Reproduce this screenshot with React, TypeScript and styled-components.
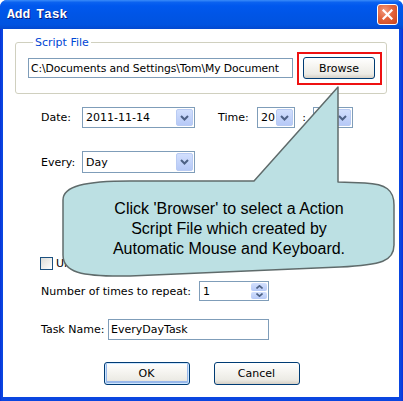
import React from 'react';
import styled, { createGlobalStyle } from 'styled-components';

const GlobalStyle = createGlobalStyle`
  html, body { margin: 0; padding: 0; background: #fff; }
  body { font-family: "DejaVu Sans", Tahoma, sans-serif; font-size: 11px; color: #000; }
  * { box-sizing: border-box; }
`;

const Window = styled.div`
  position: relative;
  width: 403px;
  height: 401px;
  display: flex;
  flex-direction: column;
  background: linear-gradient(to right, #0831d9, #0a46e0 2px, #0a46e0 calc(100% - 2px), #0831d9);
  border-radius: 7px 7px 0 0;
  overflow: hidden;
`;

const TitleBar = styled.div`
  height: 29px;
  flex: none;
  display: flex;
  align-items: center;
  justify-content: space-between;
  padding: 0 5px 0 7px;
  background: linear-gradient(
    to bottom,
    #3a8cf9 0%,
    #0b62f0 8%,
    #0058ee 20%,
    #0055e6 50%,
    #0053e0 85%,
    #0348cf 100%
  );
`;

const Title = styled.span`
  font-family: "Liberation Mono", "DejaVu Sans Mono", monospace;
  font-weight: bold;
  font-size: 13px;
  color: #fff;
  text-shadow: 1px 1px 0 #0a1a7a;
  word-spacing: -2px;
`;

const CloseButton = styled.div`
  width: 21px;
  height: 21px;
  border: 1px solid #fff;
  border-radius: 3px;
  background: radial-gradient(circle at 35% 30%, #f19a7e 0%, #e2643c 45%, #c9431c 100%);
  display: flex;
  align-items: center;
  justify-content: center;
`;

const Client = styled.div`
  flex: 1;
  margin: 0 4px 4px 3px;
  background: #fff;
  display: flex;
  flex-direction: column;
`;

const Group = styled.fieldset`
  margin: 7px 12px 0 12px;
  padding: 8px 11px 14px 12px;
  border: 1px solid #d0d0bf;
  border-radius: 3px;
  display: flex;
  align-items: center;
  gap: 10px;
`;

const Legend = styled.legend`
  color: #0046d5;
  padding: 0 2px;
  margin-left: 5px;
  line-height: 13px;
`;

const TextBox = styled.div<{ $w: number; $h?: number }>`
  width: ${p => p.$w}px;
  height: ${p => p.$h ?? 20}px;
  border: 1px solid #7f9db9;
  background: #fff;
  padding: 0 2px;
  display: flex;
  align-items: center;
  white-space: nowrap;
  overflow: hidden;
  flex: none;
`;

const PathText = styled.span`
  font-size: 10.8px;
  letter-spacing: -0.1px;
`;

const XpButton = styled.div<{ $w: number; $h: number; $default?: boolean }>`
  position: relative;
  width: ${p => p.$w}px;
  height: ${p => p.$h}px;
  flex: none;
  border: 1px solid #003c74;
  border-radius: 3px;
  background: linear-gradient(to bottom, #ffffff 0%, #f6f5f1 40%, #ecebe5 80%, #d6d0c5 100%);
  display: flex;
  align-items: center;
  justify-content: center;
  box-shadow: ${p => (p.$default ? 'inset 0 0 0 1px #cee7ff, inset 0 -1px 0 2px #98b8ea' : 'none')};
`;

const Highlight = styled.div`
  position: absolute;
  inset: -6px -8px -7px -7px;
  border: 2px solid #ee1111;
  pointer-events: none;
`;

const Form = styled.div`
  display: flex;
  flex-direction: column;
  padding-left: 37px;
`;

const Row = styled.div<{ $mt: number }>`
  display: flex;
  align-items: center;
  margin-top: ${p => p.$mt}px;
`;

const FieldLabel = styled.span<{ $w: number; $ml?: number }>`
  width: ${p => p.$w}px;
  margin-left: ${p => p.$ml ?? 0}px;
  flex: none;
  white-space: nowrap;
  padding-left: 1px;
`;

const Colon = styled.span`
  width: 18px;
  text-align: center;
  flex: none;
`;

const Combo = styled.div<{ $w: number; $h?: number }>`
  width: ${p => p.$w}px;
  height: ${p => p.$h ?? 21}px;
  flex: none;
  border: 1px solid #7f9db9;
  background: #fff;
  display: flex;
  align-items: center;
  justify-content: space-between;
  padding: 1px 1px 1px 3px;
`;

const ComboArrow = styled.div`
  width: 17px;
  height: 100%;
  border: 1px solid #b9cbf3;
  border-radius: 2px;
  background: linear-gradient(to bottom, #d2dffd, #b6c9f7);
  display: flex;
  align-items: center;
  justify-content: center;
`;

const Spin = styled.div`
  width: 70px;
  height: 20px;
  flex: none;
  border: 1px solid #7f9db9;
  background: #fff;
  display: flex;
  align-items: center;
  justify-content: space-between;
  padding: 1px 1px 1px 3px;
`;

const SpinButtons = styled.div`
  width: 16px;
  height: 100%;
  display: flex;
  flex-direction: column;
  gap: 1px;
`;

const SpinHalf = styled.div`
  flex: 1;
  border-radius: 2px;
  background: linear-gradient(to bottom, #d2dffd, #b6c9f7);
  display: flex;
  align-items: center;
  justify-content: center;
`;

const CheckBox = styled.div`
  width: 13px;
  height: 13px;
  flex: none;
  border: 1px solid #1c5180;
  background: linear-gradient(135deg, #dcdcd7, #fff);
  margin-right: 3px;
`;

const ButtonRow = styled.div`
  display: flex;
  justify-content: center;
  gap: 24px;
  margin-top: 22px;
  padding-left: 1px;
`;

const CalloutLayer = styled.svg`
  position: absolute;
  left: 0;
  top: 0;
  pointer-events: none;
`;

const CalloutText = styled.div`
  position: absolute;
  left: 63px;
  top: 199px;
  width: 332px;
  text-align: center;
  font-family: "Liberation Sans", Arial, sans-serif;
  font-size: 16px;
  line-height: 20px;
  color: #000;
`;

const Chevron = () => (
  <svg width="9" height="6" viewBox="0 0 9 6">
    <polyline points="1,1 4.5,4.5 8,1" fill="none" stroke="#4d6185" strokeWidth="2" />
  </svg>
);

const SmallArrow = ({ up }: { up?: boolean }) => (
  <svg width="7" height="4" viewBox="0 0 7 4">
    <polyline
      points={up ? '0.5,3.5 3.5,0.8 6.5,3.5' : '0.5,0.5 3.5,3.2 6.5,0.5'}
      fill="none"
      stroke="#4d6185"
      strokeWidth="1.6"
    />
  </svg>
);

const App: React.FC = () => {
  return (
    <>
      <GlobalStyle />
      <Window>
        <TitleBar>
          <Title>Add Task</Title>
          <CloseButton>
            <svg width="11" height="11" viewBox="0 0 11 11">
              <path d="M1.5 1.5 L9.5 9.5 M9.5 1.5 L1.5 9.5" stroke="#fff" strokeWidth="2.2" strokeLinecap="square" />
            </svg>
          </CloseButton>
        </TitleBar>

        <Client>
          <Group>
            <Legend>Script File</Legend>
            <TextBox $w={265}>
              <PathText>C:\Documents and Settings\Tom\My Document</PathText>
            </TextBox>
            <XpButton $w={72} $h={22}>
              Browse
              <Highlight />
            </XpButton>
          </Group>

          <Form>
            <Row $mt={13}>
              <FieldLabel $w={42}>Date:</FieldLabel>
              <Combo $w={113}>
                <span>2011-11-14</span>
                <ComboArrow><Chevron /></ComboArrow>
              </Combo>
              <FieldLabel $w={40} $ml={22}>Time:</FieldLabel>
              <Combo $w={38}>
                <span>20</span>
                <ComboArrow><Chevron /></ComboArrow>
              </Combo>
              <Colon>:</Colon>
              <Combo $w={40}>
                <span>00</span>
                <ComboArrow><Chevron /></ComboArrow>
              </Combo>
            </Row>

            <Row $mt={23}>
              <FieldLabel $w={42}>Every:</FieldLabel>
              <Combo $w={113} $h={22}>
                <span>Day</span>
                <ComboArrow><Chevron /></ComboArrow>
              </Combo>
            </Row>

            <Row $mt={84}>
              <CheckBox />
              <span>Unlimited</span>
            </Row>

            <Row $mt={11}>
              <FieldLabel $w={159}>Number of times to repeat:</FieldLabel>
              <Spin>
                <span>1</span>
                <SpinButtons>
                  <SpinHalf><SmallArrow up /></SpinHalf>
                  <SpinHalf><SmallArrow /></SpinHalf>
                </SpinButtons>
              </Spin>
            </Row>

            <Row $mt={18}>
              <FieldLabel $w={68}>Task Name:</FieldLabel>
              <TextBox $w={161} $h={21}>EveryDayTask</TextBox>
            </Row>
          </Form>

          <ButtonRow>
            <XpButton $w={86} $h={23} $default>OK</XpButton>
            <XpButton $w={86} $h={23}>Cancel</XpButton>
          </ButtonRow>
        </Client>

        <CalloutLayer width="403" height="401" viewBox="0 0 403 401">
          <path
            d="M63 200 C63 186 85 181 130 181 L254 181 L338 87 L338 182 L365 183 C386 184 394 190 394 205 L394 245 C394 261 382 265 340 267 L130 276 C80 277 63 272 63 255 Z"
            fill="#bce0e3"
            stroke="#5f6b6b"
            strokeWidth="1.5"
            strokeLinejoin="round"
          />
        </CalloutLayer>
        <CalloutText>
          Click 'Browser' to select a Action
          <br />
          Script File which created by
          <br />
          Automatic Mouse and Keyboard.
        </CalloutText>
      </Window>
    </>
  );
};

export default App;
